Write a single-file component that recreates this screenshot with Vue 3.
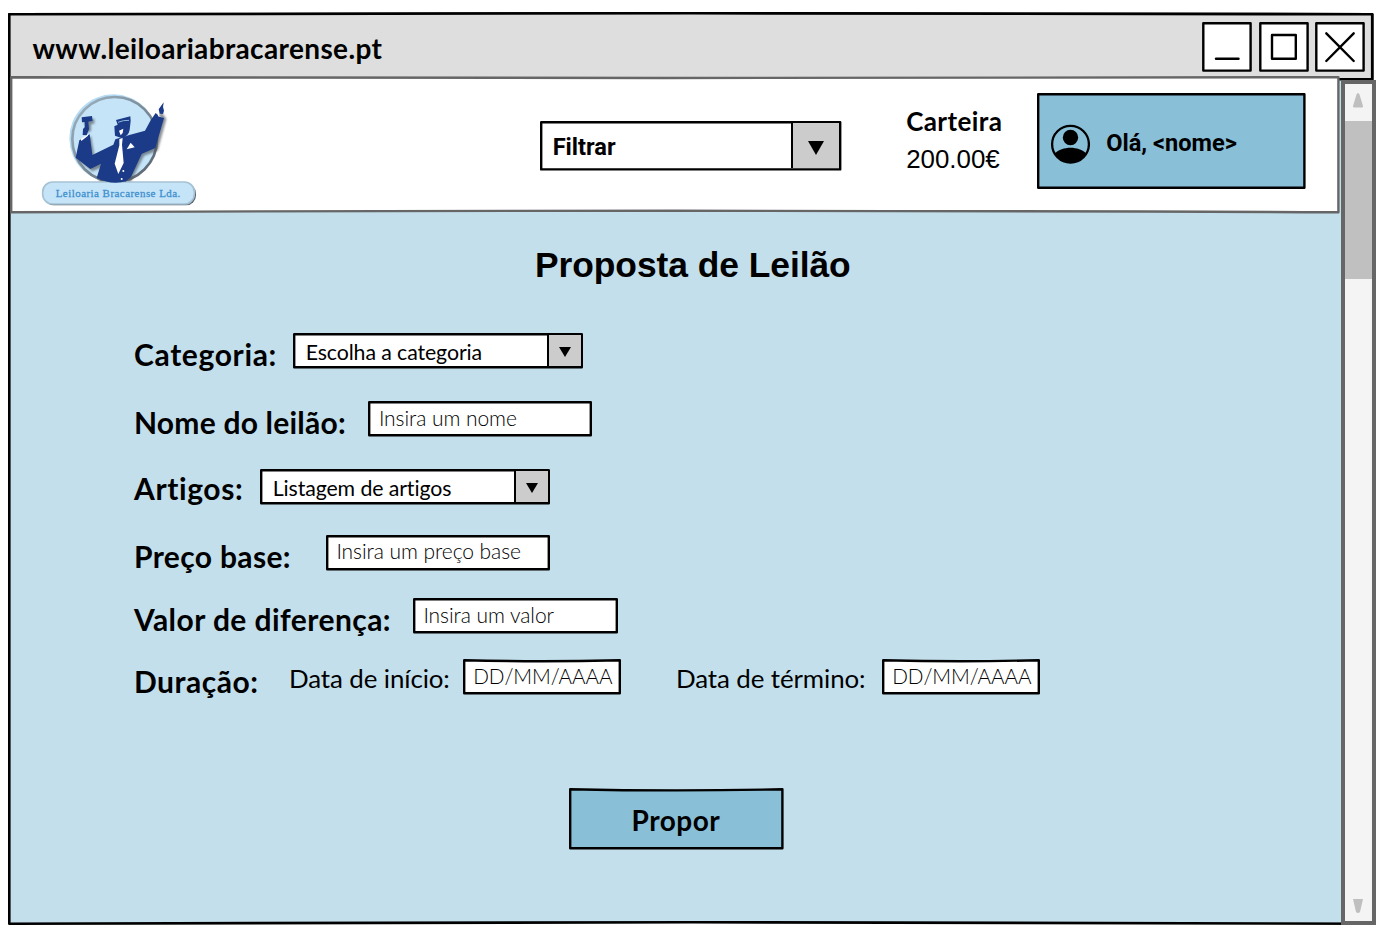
<script setup>
import { h } from 'vue'

// Hand-drawn style frame: a rectangle whose top and bottom edges may bow.
const Frame = ({ w, h: ht, bow = 0, foot = 0, sw = 2.4, fill = '#fff', stroke = '#000' }) => {
  const a = sw / 2
  const d = `M${a} ${a}Q${w / 2} ${a + bow * 2} ${w - a} ${a}V${ht - a}Q${w / 2} ${ht - a + foot * 2} ${a} ${ht - a}Z`
  return h('svg', { class: 'frame', width: w, height: ht, 'aria-hidden': 'true' }, [
    h('path', { d, fill, stroke, 'stroke-width': sw, 'stroke-linejoin': 'round' }),
  ])
}
Frame.props = ['w', 'h', 'bow', 'foot', 'sw', 'fill', 'stroke']

const rows = [
  { label: 'Categoria:', key: 'categoria', kind: 'select', text: 'Escolha a categoria', w: 290 },
  { label: 'Nome do leilão:', key: 'nome', kind: 'input', text: 'Insira um nome', w: 224 },
  { label: 'Artigos:', key: 'artigos', kind: 'select', text: 'Listagem de artigos', w: 290 },
  { label: 'Preço base:', key: 'preco', kind: 'input', text: 'Insira um preço base', w: 224 },
  { label: 'Valor de diferença:', key: 'valor', kind: 'input', text: 'Insira um valor', w: 205 },
]
</script>

<template>
  <div class="screen">
    <div class="window">
      <Frame :w="1365.5" :h="912" :bow="-1" :foot="-1.5" :sw="2.6" fill="#c3dfeb" />
      <div class="titlebar">
        <Frame :w="1365.5" :h="67.6" :bow="-1" :sw="2.6" fill="#dedede" />
        <span class="url">www.leiloariabracarense.pt</span>
        <div class="controls">
          <svg v-for="n in 3" :key="n" width="50" height="50" viewBox="0 0 50 50" fill="none" stroke="#000" stroke-width="2.4" stroke-linecap="round">
            <rect x="1.3" y="1.3" width="47.3" height="47.3" fill="#fff" stroke-linejoin="round" />
            <path v-if="n === 1" d="M14 36.8H36.5" />
            <rect v-else-if="n === 2" x="13" y="13" width="23.8" height="23.8" stroke-linejoin="round" />
            <path v-else d="M11.3 11.3L38.7 39M38.7 11.3L11.3 39" />
          </svg>
        </div>
      </div>

      <div class="body">
        <main class="page">
          <header class="header">
            <Frame :w="1329.6" :h="137.5" :bow="0.8" :foot="-1.5" :sw="2.4" stroke="#666" />
            <svg class="logo" width="180" height="130" viewBox="0 0 540 390">
              <defs>
                <linearGradient id="rim" x1="0" y1="0" x2="1" y2="1">
                  <stop offset="0" stop-color="#9fb5c4" />
                  <stop offset="1" stop-color="#56606b" />
                </linearGradient>
                <filter id="soft" x="-20%" y="-20%" width="140%" height="140%">
                  <feGaussianBlur stdDeviation="3" />
                </filter>
              </defs>
              <circle cx="250" cy="160" r="132" fill="#b5dcf4" />
              <circle cx="254" cy="163" r="127" fill="#c5e4f8" stroke="url(#rim)" stroke-width="8" />
              <g fill="#4d545c" opacity=".65" filter="url(#soft)" transform="translate(7 7)">
                <path d="M140 220L150 164L176 146L187 210L253 182L255 158L290 156L345 138L368 98L388 74L402 95L376 190L335 205L290 294L200 284L210 240L180 252Z" />
                <path d="M156 97L186 94V109L176 110V130L163 138V111L156 110Z" />
              </g>
              <rect x="42" y="296" width="456" height="65" rx="30" fill="#59636e" />
              <rect x="38" y="291" width="455" height="66" rx="30" fill="#c5e4f8" stroke="#a6c2d4" stroke-width="5" />
              <g fill="#1b3a87">
                <path d="M155 97L186 93L188 107L175 110L177 132L170 151L158 150L159 132L164 127V111L156 112Z" />
                <path d="M148 166L179 148L187 210L250 179L256 163L286 154L298 150L345 137L362 106L377 84L388 94L402 99L376 189L334 207L302 246L289 289Q244 301 200 279L213 236L181 252L137 218Z" />
                <path d="M300 200L336 205L303 276L285 290L270 240Z" />
                <path d="M258 105L301 94L302 108L299 134Q296 154 274 159L255 152L253 124L263 119Z" />
                <path d="M401 52Q397 66 402 77L399 87L389 86L386 73Z" />
              </g>
              <g fill="#fff">
                <path d="M268 162L278 159L276 179L281 234L265 267L254 236L268 181Z" />
                <path d="M302 173L314 187L290 193Z" />
                <path d="M267 137L280 131L278 144L272 151Z" />
                <path d="M152 162L175 148L173 153L154 168ZM383 75L388 93L399 98L384 94Z" />
                <circle cx="280" cy="258" r="3" />
                <circle cx="275" cy="282" r="3" />
              </g>
              <path d="M264 112Q280 105 297 106" fill="none" stroke="#8eb7dc" stroke-width="3" />
              <text x="77" y="335" textLength="374">Leiloaria Bracarense Lda.</text>
            </svg>

            <div class="select filter">
              <Frame :w="301.4" :h="49.6" />
              <span class="value">Filtrar</span>
              <span class="arrow">
                <svg width="48" height="47" viewBox="0 0 48 47"><path d="M15 18H31L23 32Z" /></svg>
              </span>
            </div>

            <div class="wallet">
              <strong>Carteira</strong>
              <span>200.00€</span>
            </div>

            <div class="user">
              <Frame :w="268.6" :h="96" fill="#89bfd7" />
              <svg class="avatar" width="40" height="40" viewBox="0 0 40 40">
                <circle cx="20.5" cy="20.3" r="18.4" fill="none" stroke="#000" stroke-width="2.3" />
                <circle cx="20.5" cy="13.5" r="7.7" />
                <path d="M4.6 29.5C8.500 25.900 14.500 23.800 20.500 23.800S32.500 25.900 36.400 29.500A18.370 18.370 0 0 1 4.600 29.500Z" />
              </svg>
              <span>Olá, &lt;nome&gt;</span>
            </div>
          </header>

          <h1>Proposta de Leilão</h1>

          <form class="form" @submit.prevent>
            <div v-for="r in rows" :key="r.key" class="row" :class="r.key">
              <label>{{ r.label }}</label>
              <div :class="r.kind" class="field">
                <Frame :w="r.w" :h="35.4" />
                <span class="value">{{ r.text }}</span>
                <span v-if="r.kind === 'select'" class="arrow">
                  <svg width="34" height="33" viewBox="0 0 34 33"><path d="M10 13H22L16 23Z" /></svg>
                </span>
              </div>
            </div>
            <div class="row duracao">
              <label>Duração:</label>
              <span class="date start">Data de início:</span>
              <div class="input field">
                <Frame :w="158" :h="35.4" :bow="1" />
                <span class="value">DD/MM/AAAA</span>
              </div>
              <span class="date end">Data de término:</span>
              <div class="input field">
                <Frame :w="158" :h="35.4" :bow="1" />
                <span class="value">DD/MM/AAAA</span>
              </div>
            </div>
            <button class="submit">
              <Frame :w="214.6" :h="61.4" :bow="1.2" fill="#89bfd7" />
              <span>Propor</span>
            </button>
          </form>
        </main>

        <aside class="scrollbar">
          <svg width="26" height="37" viewBox="0 0 26 37"><path d="M11.500 10.500Q13 7.500 14.500 10.500L18 22Q18 23.500 17 23.500H9Q8 23.500 8 22Z" /></svg>
          <div class="thumb"></div>
          <svg class="down" width="26" height="36" viewBox="0 0 26 36"><path d="M8 14H18L15 27Q13 29 11 27Z" /></svg>
        </aside>
      </div>
    </div>
  </div>
</template>

<style>
body { background: #fff; }
</style>

<style scoped>
.screen {
  width: 1382px;
  height: 935px;
  padding: 12.7px 0 0 8px;
  box-sizing: border-box;
  overflow: hidden;
  background: #fff;
  color: #000;
  font-family: Lato, "Open Sans", sans-serif;
  font-variant-ligatures: none;
}
.screen * { box-sizing: border-box; }
.frame { position: absolute; left: 0; top: 0; overflow: visible; }
.frame ~ * { position: relative; }

.window { position: relative; width: 1365.5px; height: 912px; }
.titlebar { position: relative; display: flex; justify-content: space-between; height: 67.6px; padding: 9.5px 8.6px 0 24.5px; }
.url { font-size: 28px; font-weight: 700; letter-spacing: .36px; line-height: 52px; white-space: nowrap; }
.controls { display: flex; gap: 6.4px; }

.body { display: flex; margin-top: -4.2px; }
.page { flex: none; width: 1332px; }

.header { position: relative; display: flex; align-items: flex-start; width: 1329.6px; height: 137.5px; margin-left: 2px; }
.logo { flex: none; margin: 9px 0 0 20px; }
.logo text { font: 400 33px "Liberation Serif", serif; fill: #3d8fce; stroke: #3d8fce; stroke-width: .8px; }

.select { display: flex; justify-content: space-between; position: relative; }
.arrow { display: block; border-left: 2.4px solid #000; background: #ccc; }
.arrow svg { display: block; }

.filter { width: 301.4px; height: 49.6px; margin: 45px 0 0 330.2px; padding: 1.2px; }
.filter .value { padding-left: 11.3px; font: 700 23.6px/51px Roboto, sans-serif; }
.filter .arrow { width: 48px; height: 45.2px; margin: 1px 1px 0 0; overflow: hidden; }

.wallet { display: flex; flex-direction: column; width: 131px; margin: 27px 0 0 64.6px; white-space: nowrap; }
.wallet strong { font-size: 26px; letter-spacing: .4px; line-height: 37px; }
.wallet span { font: 25.9px/38.6px "Liberation Sans", Arial, sans-serif; }

.user { position: relative; display: flex; align-items: center; width: 268.6px; height: 96px; margin-top: 17px; padding: 6px 0 0 13px; gap: 16px; }
.user span { font: 700 23.6px/36px Roboto, sans-serif; white-space: nowrap; top: -1px; }

h1 { margin: 30px 0 0; padding-left: 37.6px; text-align: center; font: 700 35.4px/42px "Liberation Sans", Arial, sans-serif; letter-spacing: -.05px; white-space: nowrap; }

.form { padding: 47.5px 0 0 125.2px; }
.row { display: flex; align-items: flex-start; height: 35px; white-space: nowrap; }
label { flex: none; padding-left: .8px; font-size: 30px; font-weight: 700; line-height: 43px; letter-spacing: .4px; }
.field { position: relative; flex: none; height: 35.4px; }
.field .value { font-size: 21.3px; line-height: 39.5px; letter-spacing: -.1px; }
.select.field { width: 290px; }
.select.field .value { padding-left: 13px; }
.select.field .arrow { width: 34px; height: 31px; margin: 2px 2px 0 0; overflow: hidden; }
.select.field .arrow svg { margin-top: -1px; }
.input.field .value { display: block; padding-left: 10.7px; font-size: 21px; font-weight: 300; line-height: 34px; letter-spacing: -.06px; }

.categoria label { width: 159.5px; letter-spacing: .65px; }
.nome { margin-top: 33px; }
.nome label { width: 235px; letter-spacing: .22px; }
.artigos { margin-top: 33px; }
.artigos label { width: 126.5px; line-height: 39px; letter-spacing: .6px; }
.preco { margin-top: 31px; }
.preco label { width: 192.5px; letter-spacing: .35px; }
.preco .input.field .value { line-height: 32px; }
.valor { margin-top: 28px; }
.valor label { width: 279.5px; letter-spacing: .43px; }
.duracao { margin-top: 26px; }
.duracao label { width: 155.8px; line-height: 45px; letter-spacing: .5px; }
.duracao .input.field { width: 158px; }
.duracao .input.field .value { padding-left: 10.2px; font-size: 20.7px; }
.date { font-size: 25.9px; line-height: 38px; letter-spacing: -.1px; }
.date.start { width: 174px; }
.date.end { width: 206px; margin-left: 55px; }

.submit { position: relative; display: block; width: 214.6px; height: 61.4px; margin: 94px 0 0 435.4px; padding: 0; border: 0; background: none; color: #000; font: 700 28px/62px Lato, sans-serif; letter-spacing: .5px; }
.submit span { display: block; padding-top: 1px; }

.scrollbar { display: flex; flex: none; flex-direction: column; width: 35px; height: 845px; margin: 4px 0 0 .6px; border: 4px solid #666; background: #f4f4f4; }
.scrollbar svg { display: block; flex: none; fill: #bfbfbf; }
.thumb { flex: none; height: 158px; background: #c0c0c0; }
.down { margin-top: auto; }
</style>
